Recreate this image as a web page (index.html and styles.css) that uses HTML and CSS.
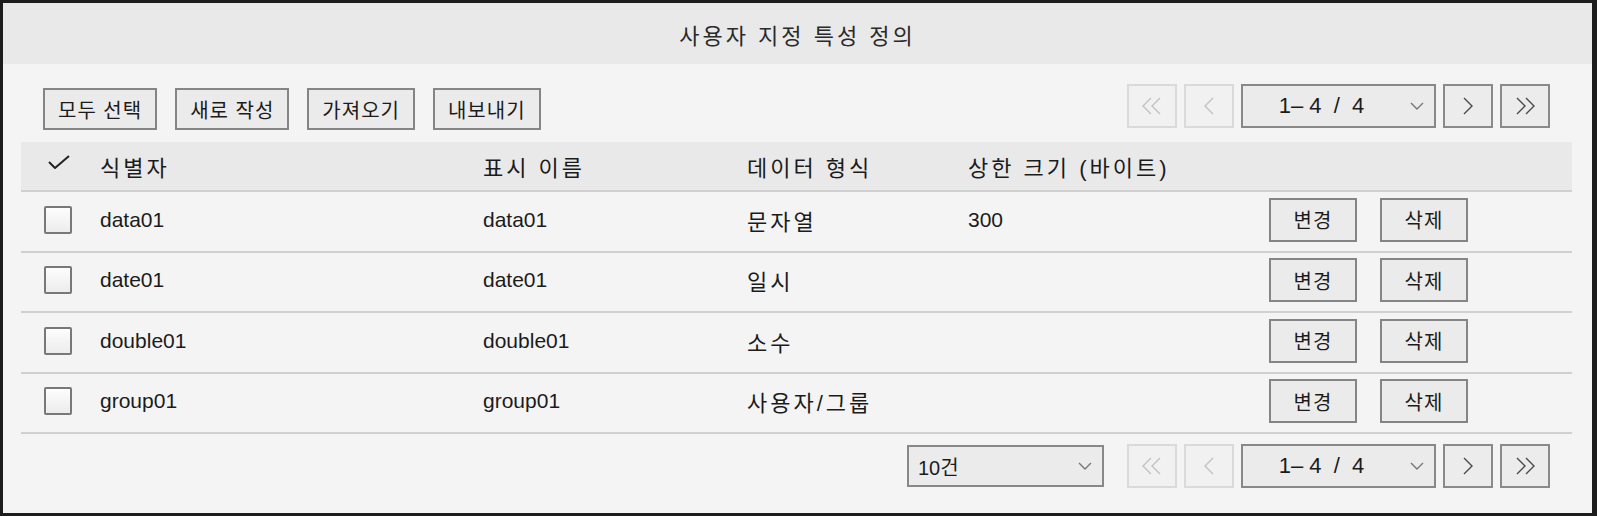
FILE: index.html
```html
<!DOCTYPE html>
<html lang="ko">
<head>
<meta charset="utf-8">
<title>사용자 지정 특성 정의</title>
<link rel="stylesheet" href="styles.css">
</head>
<body>
<div class="dialog">
  <div class="dialog-title">사용자 지정 특성 정의</div>
  <div class="dialog-body">
    <div class="toolbar">
      <div class="actions">
        <button class="btn">모두 선택</button>
        <button class="btn">새로 작성</button>
        <button class="btn">가져오기</button>
        <button class="btn">내보내기</button>
      </div>
      <div class="pager">
        <span class="pg-btn disabled"><svg width="20" height="18" viewBox="0 0 20 18"><polyline points="9,1 1,9 9,17"/><polyline points="18,1 10,9 18,17"/></svg></span>
        <span class="pg-btn disabled"><svg width="12" height="18" viewBox="0 0 12 18"><polyline points="10,1 2,9 10,17"/></svg></span>
        <span class="pg-select"><span class="pg-text">1–&nbsp;4 &nbsp;/ &nbsp;4</span><svg class="caret" width="14" height="8" viewBox="0 0 14 8"><polyline points="1,1 7,7 13,1"/></svg></span>
        <span class="pg-btn"><svg width="12" height="18" viewBox="0 0 12 18"><polyline points="2,1 10,9 2,17"/></svg></span>
        <span class="pg-btn"><svg width="20" height="18" viewBox="0 0 20 18"><polyline points="2,1 10,9 2,17"/><polyline points="11,1 19,9 11,17"/></svg></span>
      </div>
    </div>

    <table class="attr-table">
      <thead>
        <tr>
          <th class="c-check"><svg class="tick" width="22" height="14" viewBox="0 0 22 14"><polyline points="1,7 7,13 21,1"/></svg></th>
          <th class="c-id ko">식별자</th>
          <th class="c-name ko">표시 이름</th>
          <th class="c-type ko">데이터 형식</th>
          <th class="c-size ko">상한 크기 (바이트)</th>
          <th class="c-act"></th>
        </tr>
      </thead>
      <tbody>
        <tr>
          <td><span class="check-box"></span></td>
          <td>data01</td>
          <td>data01</td>
          <td class="ko">문자열</td>
          <td>300</td>
          <td class="row-actions"><button class="btn row-btn">변경</button><button class="btn row-btn">삭제</button></td>
        </tr>
        <tr>
          <td><span class="check-box"></span></td>
          <td>date01</td>
          <td>date01</td>
          <td class="ko">일시</td>
          <td></td>
          <td class="row-actions"><button class="btn row-btn">변경</button><button class="btn row-btn">삭제</button></td>
        </tr>
        <tr>
          <td><span class="check-box"></span></td>
          <td>double01</td>
          <td>double01</td>
          <td class="ko">소수</td>
          <td></td>
          <td class="row-actions"><button class="btn row-btn">변경</button><button class="btn row-btn">삭제</button></td>
        </tr>
        <tr>
          <td><span class="check-box"></span></td>
          <td>group01</td>
          <td>group01</td>
          <td class="ko">사용자/그룹</td>
          <td></td>
          <td class="row-actions"><button class="btn row-btn">변경</button><button class="btn row-btn">삭제</button></td>
        </tr>
      </tbody>
    </table>

    <div class="footer">
      <span class="size-select"><span class="size-text">10건</span><svg class="caret" width="14" height="8" viewBox="0 0 14 8"><polyline points="1,1 7,7 13,1"/></svg></span>
      <div class="pager">
        <span class="pg-btn disabled"><svg width="20" height="18" viewBox="0 0 20 18"><polyline points="9,1 1,9 9,17"/><polyline points="18,1 10,9 18,17"/></svg></span>
        <span class="pg-btn disabled"><svg width="12" height="18" viewBox="0 0 12 18"><polyline points="10,1 2,9 10,17"/></svg></span>
        <span class="pg-select"><span class="pg-text">1–&nbsp;4 &nbsp;/ &nbsp;4</span><svg class="caret" width="14" height="8" viewBox="0 0 14 8"><polyline points="1,1 7,7 13,1"/></svg></span>
        <span class="pg-btn"><svg width="12" height="18" viewBox="0 0 12 18"><polyline points="2,1 10,9 2,17"/></svg></span>
        <span class="pg-btn"><svg width="20" height="18" viewBox="0 0 20 18"><polyline points="2,1 10,9 2,17"/><polyline points="11,1 19,9 11,17"/></svg></span>
      </div>
    </div>
  </div>
</div>
</body>
</html>
```

FILE: styles.css
```css
html, body {
  margin: 0;
  height: 100%;
  }
body {
  font-family: "Liberation Sans", "Noto Sans CJK KR", sans-serif;
  font-size: 21px;
  color: #1b1b1b;
  background-color: #f4f4f4;
  }
.dialog {
  box-sizing: border-box;
  height: 516px;
  border: 3px solid #1d1d1d;
  border-right-width: 5px;
  background-color: #f4f4f4;
  }
.dialog-title {
  height: 61px;
  background-color: #e9e9e9;
  display: flex;
  align-items: center;
  justify-content: center;
  font-size: 22px;
  letter-spacing: 3px;
  color: #2a2a2a;
  }
.dialog-body {
  padding: 20px 20px 0 18px;
  }
.ko {
  font-size: 22px;
  letter-spacing: 3px;
  }

/* buttons */
.btn {
  box-sizing: border-box;
  height: 42px;
  padding: 0 13px;
  border: 2px solid #858585;
  border-radius: 0;
  background-color: #ebebeb;
  font-family: inherit;
  font-size: 20px;
  letter-spacing: 1px;
  color: #1b1b1b;
  }
.toolbar {
  display: flex;
  justify-content: space-between;
  align-items: flex-start;
  height: 46px;
  padding: 0 22px;
  margin-bottom: 12px;
  }
.actions {
  display: flex;
  gap: 18px;
  margin-top: 4px;
  }

/* pager */
.pager {
  display: flex;
  gap: 7px;
  }
.pg-btn {
  box-sizing: border-box;
  width: 50px;
  height: 44px;
  border: 2px solid #8a8a8a;
  background-color: #ececec;
  display: flex;
  align-items: center;
  justify-content: center;
  }
.pg-btn svg polyline,
.caret polyline,
.tick polyline {
  fill: none;
  stroke: #4a4a4a;
  stroke-width: 1.4;
  }
.pg-btn.disabled {
  border-color: #dadada;
  background-color: #f1f1f1;
  }
.pg-btn.disabled svg polyline {
  stroke: #c2c2c2;
  }
.pg-select,
.size-select {
  box-sizing: border-box;
  height: 44px;
  border: 2px solid #888;
  background-color: #ebebeb;
  display: flex;
  align-items: center;
  }
.pg-select {
  width: 195px;
  }
.pg-text {
  flex: 1;
  text-align: center;
  font-size: 22px;
  }
.caret {
  margin: 0 10px;
  }
.caret polyline {
  stroke: #777;
  }

/* table */
.attr-table {
  width: 100%;
  border-collapse: collapse;
  table-layout: fixed;
  }
.attr-table th {
  height: 48px;
  padding: 0;
  background-color: #e9e9e9;
  font-weight: normal;
  text-align: left;
  border-bottom: 2px solid #d0d0d0;
  }
.attr-table td {
  height: 55.5px;
  padding: 0 0 3px;
  border-bottom: 2px solid #d0d0d0;
  }
th.c-check { width: 79px; }
th.c-id { width: 383px; }
th.c-name { width: 264px; }
th.c-type { width: 221px; }
th.c-size { width: 301px; }
th.c-act { width: 303px; }
.tick {
  display: block;
  margin: 0 0 9px 27px;
  }
.tick polyline {
  stroke: #222;
  stroke-width: 2;
  }
.check-box {
  display: block;
  box-sizing: border-box;
  width: 28px;
  height: 28px;
  margin-left: 23px;
  border: 2px solid #787878;
  border-radius: 2px;
  background: linear-gradient(#fdfdfd, #ececec);
  }
.row-actions {
  white-space: nowrap;
  }
.row-btn {
  width: 88px;
  height: 44px;
  padding: 0;
  margin-right: 23px;
  }

/* footer */
.footer {
  display: flex;
  justify-content: flex-end;
  align-items: center;
  gap: 23px;
  padding: 10px 22px 0;
  }
.size-select {
  width: 197px;
  height: 42px;
  }
.size-text {
  flex: 1;
  padding-left: 9px;
  font-size: 20px;
  }
```
